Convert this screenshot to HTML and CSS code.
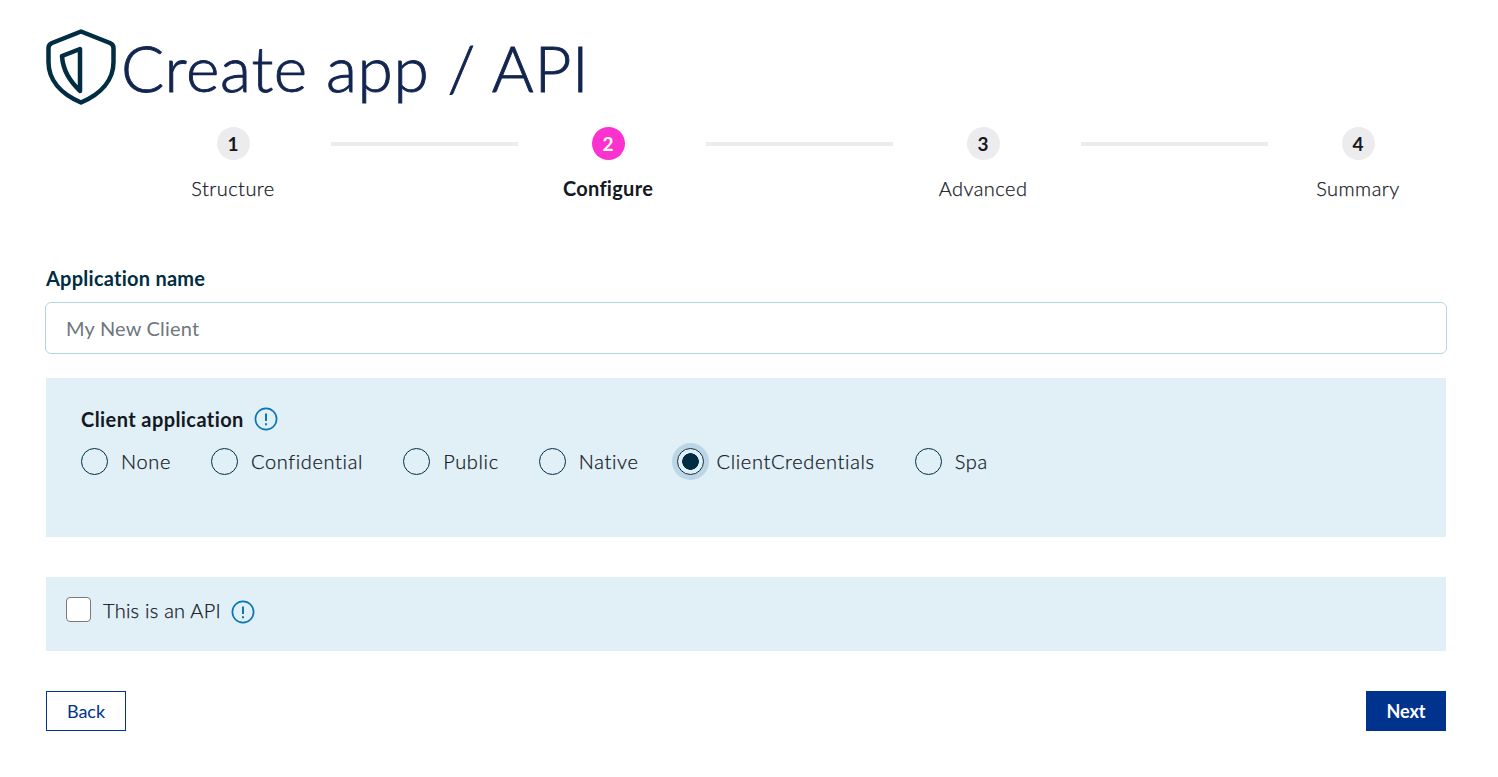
FILE: index.html
```html
<!DOCTYPE html>
<html lang="en">
<head>
  <meta charset="UTF-8">
  <title>Create app / API</title>
  <link rel="stylesheet" href="styles.css">
</head>
<body>
  <div class="container">
    <div class="page-title">
      <svg class="shield" viewBox="0 0 70 76" width="70" height="76" fill="none" stroke="#002d42" stroke-width="4.5" stroke-linejoin="round">
        <path d="M35 2.500 L64 14 Q67.500 15.500 67.500 19 V33 C67.500 51 55 65 35 73.500 C15 65 2.500 51 2.500 33 V19 Q2.500 15.500 6 14 Z"/>
        <path d="M34 20 V62 C24 52 17 42 16 27 Z"/>
      </svg>
      <h1>Create app / API</h1>
    </div>

    <div class="stepper">
      <div class="step">
        <span class="step-num">1</span>
        <span class="step-label">Structure</span>
      </div>
      <div class="step-line"></div>
      <div class="step active">
        <span class="step-num">2</span>
        <span class="step-label">Configure</span>
      </div>
      <div class="step-line"></div>
      <div class="step">
        <span class="step-num">3</span>
        <span class="step-label">Advanced</span>
      </div>
      <div class="step-line"></div>
      <div class="step">
        <span class="step-num">4</span>
        <span class="step-label">Summary</span>
      </div>
    </div>

    <form>
      <label class="field-label" for="appName">Application name</label>
      <input class="text-input" type="text" id="appName" placeholder="My New Client">

      <div class="panel client-panel">
        <div class="panel-title">
          <span>Client application</span>
          <svg class="info" viewBox="0 0 24 24" width="24" height="24" fill="none" stroke="#0a78b4" stroke-width="1.700">
            <circle cx="12" cy="12" r="10.600"/>
            <path d="M12 6.500 V14" stroke-width="2"/>
            <path d="M12 16.200 V18.200" stroke-width="2"/>
          </svg>
        </div>
        <div class="radio-row">
          <div class="radio"><span class="radio-dot"></span>None</div>
          <div class="radio"><span class="radio-dot"></span>Confidential</div>
          <div class="radio"><span class="radio-dot"></span>Public</div>
          <div class="radio"><span class="radio-dot"></span>Native</div>
          <div class="radio checked"><span class="radio-dot"></span>ClientCredentials</div>
          <div class="radio"><span class="radio-dot"></span>Spa</div>
        </div>
      </div>

      <div class="panel api-panel">
        <span class="checkbox"></span>
        <span>This is an API</span>
        <svg class="info" viewBox="0 0 24 24" width="24" height="24" fill="none" stroke="#0a78b4" stroke-width="1.700">
          <circle cx="12" cy="12" r="10.600"/>
          <path d="M12 6.500 V14" stroke-width="2"/>
          <path d="M12 16.200 V18.200" stroke-width="2"/>
        </svg>
      </div>

      <div class="actions">
        <button type="button" class="btn btn-back">Back</button>
        <button type="button" class="btn btn-next">Next</button>
      </div>
    </form>
  </div>
</body>
</html>
```

FILE: styles.css
```css
body { margin: 0; font-family: "Lato", "Open Sans", Arial, sans-serif; background-color: #fff; color: #1c2430; }
.container { width: 1400px; margin-left: 46px; padding-top: 29px; }

.page-title { display: flex; align-items: flex-start; height: 99px; }
.shield { display: block; flex: none; margin-right: 5px; }
h1 { margin: 0; font-size: 64px; font-weight: 300; line-height: 77px; color: #12254f; letter-spacing: .65px; -webkit-text-stroke: .9px #12254f; }

.stepper { display: flex; padding-left: 99px; }
.step { width: 176px; flex: none; display: flex; flex-direction: column; align-items: center; }
.step-num { width: 33px; height: 33px; border-radius: 50%; background-color: #ececee; color: #14181f; display: flex; align-items: center; justify-content: center; font-size: 19px; font-weight: 700; margin-top: -1px; }
.step-label { margin-top: 16px; font-size: 20px; letter-spacing: .45px; line-height: 24px; font-weight: 300; color: #14181f; -webkit-text-stroke: .25px #14181f; }
.step.active .step-num { background-color: #fb32d0; color: #fff; }
.step.active .step-label { font-weight: 700; letter-spacing: .3px; -webkit-text-stroke: 0; }
.step-line { width: 187px; height: 4px; margin: 14px 2px 0 10px; background-color: #ececee; }

form { margin-top: 66px; }
.field-label { display: block; font-size: 20px; letter-spacing: .25px; font-weight: 700; line-height: 24px; color: #002d42; }
.text-input { display: block; box-sizing: border-box; width: 1402px; height: 52px; margin: 12px 0 0 -1px; padding: 0 20px 1px; border: 1px solid #b5d3e8; border-radius: 6px; font-family: inherit; font-size: 20px; letter-spacing: .2px; }
.text-input::placeholder { color: #6f7780; opacity: 1; }

.panel { background-color: #e1eff7; }
.client-panel { height: 159px; margin-top: 24px; box-sizing: border-box; padding: 29px 35px 0; }
.panel-title { display: flex; align-items: center; gap: 10px; font-size: 20px; letter-spacing: .42px; font-weight: 700; line-height: 24px; color: #14181f; }
.radio-row { display: flex; margin-top: 16px; gap: 40px; }
.radio { display: flex; align-items: center; gap: 13px; font-size: 20px; letter-spacing: .65px; line-height: 28px; font-weight: 300; color: #14181f; -webkit-text-stroke: .25px #14181f; }
.radio-dot { width: 27px; height: 27px; box-sizing: border-box; border: 1px solid #002d42; border-radius: 50%; flex: none; }
.radio.checked { margin-left: -2px; }
.radio.checked .radio-dot { box-shadow: 0 0 0 5px #bcd6e6; background: radial-gradient(circle, #002d42 0, #002d42 8px, transparent 8.600px); }

.api-panel { height: 74px; box-sizing: border-box; margin-top: 40px; padding: 0 0 8px 20px; display: flex; align-items: center; font-size: 20px; letter-spacing: .25px; font-weight: 300; color: #14181f; -webkit-text-stroke: .25px #14181f; }
.checkbox { width: 25px; height: 25px; box-sizing: border-box; border: 1.500px solid #7a7a7a; border-radius: 4px; background-color: #fff; margin: -1px 12px 0 0; }
.api-panel .info { margin: 4px 0 0 10px; }

.actions { display: flex; justify-content: space-between; margin-top: 40px; }
.btn { width: 80px; height: 40px; font-family: inherit; font-size: 18px; cursor: pointer; border: 1px solid #00338d; padding: 0; }
.btn-back { background-color: #fff; color: #00338d; }
.btn-next { background-color: #00338d; color: #fff; font-weight: 700; }
```
